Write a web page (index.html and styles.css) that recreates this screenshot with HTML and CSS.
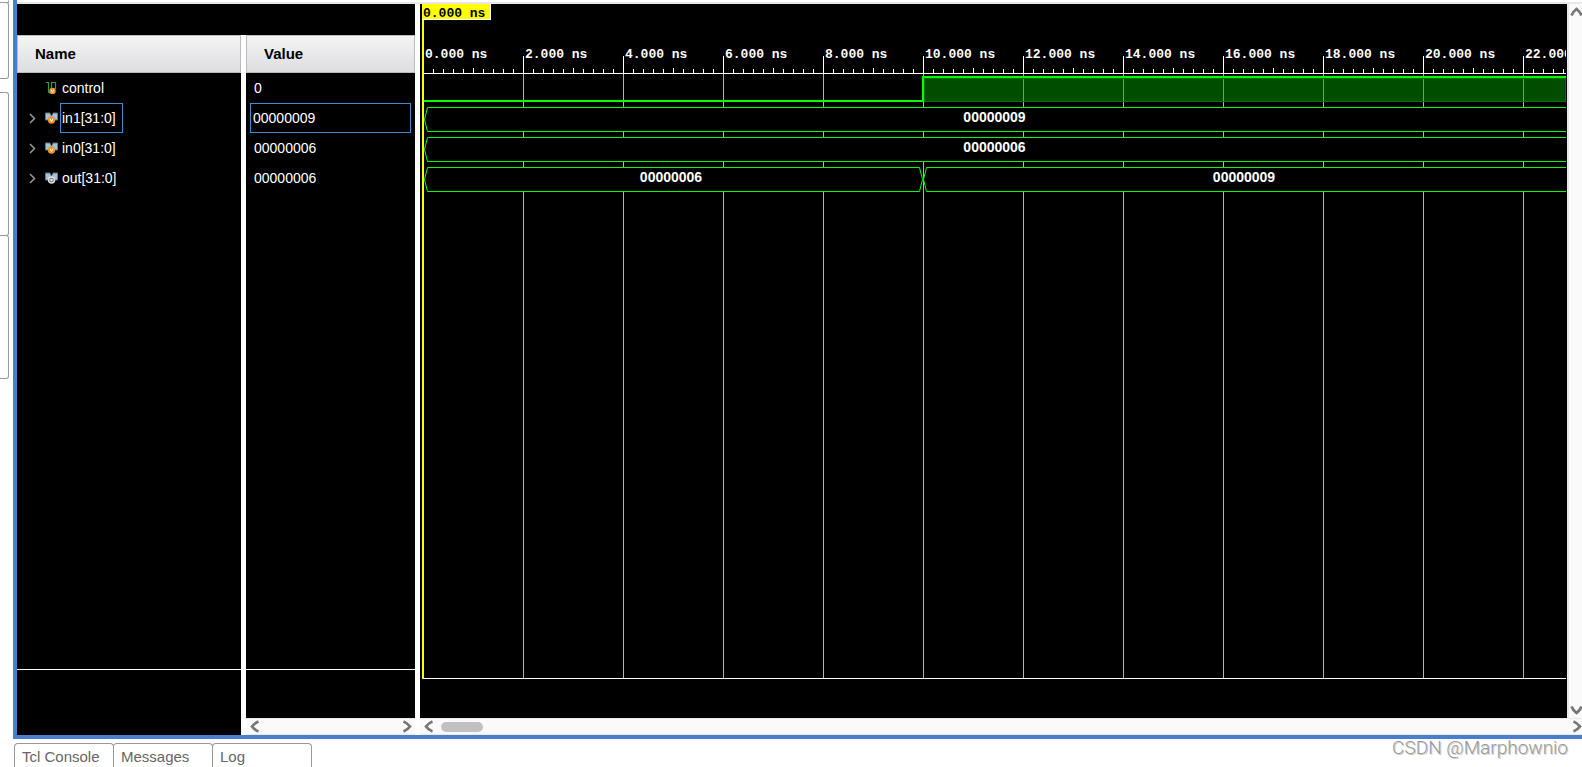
FILE: index.html
```
<!DOCTYPE html>
<html lang="en">
<head>
<meta charset="utf-8">
<title>Waveform</title>
<link rel="stylesheet" href="styles.css">
</head>
<body>
<svg class="defs" aria-hidden="true">
  <symbol id="chev-left" viewBox="0 0 10 13"><path d="M8.500 1.500C6 2.500 3.500 4.500 2 6.500C3.500 8.500 6 10.500 8.500 11.500" fill="none" stroke="#777" stroke-width="2.800"/></symbol>
  <symbol id="chev-right" viewBox="0 0 10 13"><path d="M1.500 1.500C4 2.500 6.500 4.500 8 6.500C6.500 8.500 4 10.500 1.500 11.500" fill="none" stroke="#777" stroke-width="2.800"/></symbol>
  <symbol id="chev-up" viewBox="0 0 13 10"><path d="M1.500 8.500C2.500 6 4.500 3.500 6.500 2C8.500 3.500 10.500 6 11.500 8.500" fill="none" stroke="#777" stroke-width="2.800"/></symbol>
  <symbol id="chev-down" viewBox="0 0 13 10"><path d="M1.500 1.500C2.500 4 4.500 6.500 6.500 8C8.500 6.500 10.500 4 11.500 1.500" fill="none" stroke="#777" stroke-width="2.800"/></symbol>
  <symbol id="expand" viewBox="0 0 7 11"><path d="M1 1L5.500 5.500L1 10" fill="none" stroke="#999" stroke-width="1.500"/></symbol>
  <symbol id="badge" viewBox="0 0 8 8"><circle cx="4" cy="4" r="3.700" fill="#f0922b"/><path d="M2.500 2.500L4 5.500L5.500 2.500" fill="none" stroke="#fff" stroke-width="1"/></symbol>
  <symbol id="wire" viewBox="0 0 13 13"><path d="M1 .5H3.500V10.500M6.500 11V.5H10.500V7M3.500 10.500H6" fill="none" stroke="#2f9e46" stroke-width="1.200"/><use href="#badge" x="4" y="5.500" width="7" height="7"/></symbol>
  <symbol id="bus" viewBox="0 0 13 13"><path d="M.5 1H5L6.500 4L8 1H12.500V8H.5Z" fill="#9cc4dc" stroke="#68757c" stroke-width="1"/><path d="M5.500 1H7.500L6.500 3.500Z" fill="#000"/></symbol>
  <symbol id="bus-in" viewBox="0 0 13 13"><use href="#bus" width="13" height="13"/><use href="#badge" x="2.500" y="4" width="8" height="8"/></symbol>
  <symbol id="bus-out" viewBox="0 0 13 13"><use href="#bus" width="13" height="13"/><circle cx="6.500" cy="8" r="3" fill="#777" stroke="#ddd" stroke-width="1.500"/><circle cx="6.500" cy="8" r="1.200" fill="#eee"/></symbol>
  <symbol id="cap-left" viewBox="0 0 4 25"><path d="M4 .5H3.500L.5 12.500L3.500 24.500H4" fill="#000" stroke="#0f0"/></symbol>
  <symbol id="cap-right" viewBox="0 0 4 25"><path d="M0 .5H.5L3.500 12.500L.5 24.500H0" fill="#000" stroke="#0f0"/></symbol>
</svg>

<div class="workspace">
  <aside class="dock">
    <div class="dock-tab dock-first"></div>
    <div class="dock-tab dock-second"></div>
    <div class="dock-tab dock-third"></div>
    <div class="dock-tab dock-fourth"></div>
  </aside>

  <main class="panel">
    <section class="signals">
      <div class="column names">
        <h2 class="head">Name</h2>
        <div class="rows">
          <div class="row"><span class="toggle"></span><svg class="icon"><use href="#wire"/></svg><span class="label">control</span></div>
          <div class="row"><button class="toggle" aria-label="Expand in1"><svg class="arrow"><use href="#expand"/></svg></button><svg class="icon"><use href="#bus-in"/></svg><span class="label selected">in1[31:0]</span></div>
          <div class="row"><button class="toggle" aria-label="Expand in0"><svg class="arrow"><use href="#expand"/></svg></button><svg class="icon"><use href="#bus-in"/></svg><span class="label">in0[31:0]</span></div>
          <div class="row"><button class="toggle" aria-label="Expand out"><svg class="arrow"><use href="#expand"/></svg></button><svg class="icon"><use href="#bus-out"/></svg><span class="label">out[31:0]</span></div>
        </div>
        <div class="foot"></div>
      </div>
      <div class="column values">
        <h2 class="head">Value</h2>
        <div class="rows">
          <div class="row"><span class="value">0</span></div>
          <div class="row"><span class="value selected">00000009</span></div>
          <div class="row"><span class="value">00000006</span></div>
          <div class="row"><span class="value">00000006</span></div>
        </div>
        <div class="foot foot-short"></div>
        <div class="hscroll">
          <button aria-label="Scroll left"><svg class="chev"><use href="#chev-left"/></svg></button>
          <button class="end" aria-label="Scroll right"><svg class="chev"><use href="#chev-right"/></svg></button>
        </div>
      </div>
    </section>

    <section class="wave">
      <div class="view">
        <div class="canvas">
          <div class="ruler">
            <div class="times"><span>0.000 ns</span><span>2.000 ns</span><span>4.000 ns</span><span>6.000 ns</span><span>8.000 ns</span><span>10.000 ns</span><span>12.000 ns</span><span>14.000 ns</span><span>16.000 ns</span><span>18.000 ns</span><span>20.000 ns</span><span>22.000 ns</span></div>
            <div class="ticks"></div>
          </div>
          <div class="plot">
            <div class="track">
              <div class="low" style="width:498px"></div>
              <div class="high"></div>
            </div>
            <div class="track">
              <div class="segment rest"><svg class="cap"><use href="#cap-left"/></svg><span class="data">00000009</span></div>
            </div>
            <div class="track">
              <div class="segment rest"><svg class="cap"><use href="#cap-left"/></svg><span class="data">00000006</span></div>
            </div>
            <div class="track">
              <div class="segment" style="width:499px"><svg class="cap"><use href="#cap-left"/></svg><span class="data">00000006</span><svg class="cap"><use href="#cap-right"/></svg></div>
              <div class="segment rest"><svg class="cap"><use href="#cap-left"/></svg><span class="data">00000009</span></div>
            </div>
          </div>
          <div class="cursor"><span class="marker">0.000 ns</span></div>
        </div>
        <div class="vscroll">
          <button aria-label="Scroll up"><svg class="chev-v"><use href="#chev-up"/></svg></button>
          <button aria-label="Scroll down"><svg class="chev-v"><use href="#chev-down"/></svg></button>
        </div>
      </div>
      <div class="hscroll wide">
        <button aria-label="Scroll left"><svg class="chev"><use href="#chev-left"/></svg></button>
        <div class="thumb"></div>
        <button class="end" aria-label="Scroll right"><svg class="chev"><use href="#chev-right"/></svg></button>
      </div>
    </section>
  </main>
</div>

<footer class="bottom">
  <nav class="tabs"><button>Tcl Console</button><button>Messages</button><button>Log</button></nav>
  <span class="watermark">CSDN @Marphownio</span>
</footer>
</body>
</html>
```
FILE: styles.css
```
* { box-sizing: border-box; }

body {
  margin: 0;
  height: 100vh;
  overflow: hidden;
  display: flex;
  flex-direction: column;
  background: #fff;
  font-family: "Liberation Sans", Arial, sans-serif;
  font-size: 14px;
}

button {
  padding: 0;
  border: 0;
  background: none;
  font: inherit;
  color: inherit;
}

svg { display: block; flex: none; }
.defs { position: absolute; width: 0; height: 0; }

.workspace { flex: 1; min-height: 0; display: flex; }

/* left dock */
.dock { width: 13px; padding-right: 4px; flex: none; }
.dock-tab { border: 1px solid #999; border-left: 0; border-radius: 0 3px 3px 0; }
.dock-first { height: 3px; border-top: 0; }
.dock-second { height: 77px; margin-top: -1px; }
.dock-third { height: 144px; margin-top: 13px; }
.dock-fourth { height: 144px; margin-top: -1px; }

.panel {
  flex: 1;
  min-width: 0;
  display: flex;
  gap: 5px;
  padding-top: 4px;
  border-left: 4px solid #4a7dcf;
  border-bottom: 4px solid #4a7dcf;
  background: linear-gradient(#fff 2px, #e8e8e8 2px, #e8e8e8 4px, #fff 4px);
}

/* signal list */
.signals {
  flex: none;
  display: flex;
  gap: 5px;
  border-top: 31px solid #000;
}
.column { display: flex; flex-direction: column; background: #000; color: #fff; }
.names { width: 224px; }
.values { width: 169px; }
.head {
  margin: 0;
  height: 38px;
  padding-left: 17px;
  border: 1px solid #bbb;
  background: linear-gradient(#f4f4f4, #dedee1);
  color: #000;
  font-size: 15px;
  line-height: 36px;
}
.rows { flex: 1; }
.row { height: 30px; display: flex; align-items: center; }
.toggle { width: 28px; padding-left: 12px; }
.arrow { width: 7px; height: 11px; }
.icon { width: 13px; height: 13px; margin-right: 2px; }
.label, .value { height: 30px; line-height: 28px; border: 1px solid transparent; }
.label { padding: 0 6px 0 1px; }
.value { flex: 1; margin: 0 4px; padding-left: 3px; }
.selected { border-color: #3c8ed0; }
.value.selected { padding-left: 2px; }
.foot { height: 66px; border-top: 1px solid #fff; }
.foot-short { height: 49px; }

/* scroll bars */
.hscroll {
  height: 17px;
  padding: 0 3px 0 4px;
  display: flex;
  align-items: center;
  background: #fafafa;
  border-top: 1px solid #e8e8e8;
  border-bottom: 1px solid #e8e8e8;
}
.end { margin-left: auto; }
.chev { width: 10px; height: 13px; }
.thumb { width: 42px; height: 10px; margin-left: 7px; border-radius: 5px; background: #c1c1c1; }
.wide { padding-right: 0; overflow: hidden; }
.vscroll {
  width: 15px;
  flex: none;
  display: flex;
  flex-direction: column;
  justify-content: space-between;
  padding: 3px 0;
  overflow: hidden;
  background: #fafafa;
  border-left: 2px solid #e8e8e8;
}
.vscroll button { padding-left: 1px; }
.chev-v { width: 13px; height: 10px; }

/* waveform */
.wave { flex: 1; min-width: 0; display: flex; flex-direction: column; }
.view { flex: 1; min-height: 0; display: flex; }
.canvas {
  position: relative;
  flex: 1;
  min-width: 0;
  display: flex;
  flex-direction: column;
  padding: 0 1px 39px 3px;
  background: #000;
  color: #fff;
}
.ruler {
  height: 70px;
  display: flex;
  flex-direction: column;
  justify-content: flex-end;
  background: linear-gradient(90deg, #fff 1px, transparent 1px) 0 100% / 100px 17px repeat-x;
  border-bottom: 1px solid #fff;
}
.times {
  display: flex;
  overflow: hidden;
  font: bold 13px/16px "Liberation Mono", monospace;
  white-space: nowrap;
}
.times span { width: 100px; flex: none; padding-left: 2px; }
.ticks {
  height: 10px;
  background:
    linear-gradient(90deg, #fff 1px, transparent 1px) 50px 100% / 100px 5px repeat-x,
    linear-gradient(90deg, #fff 1px, transparent 1px) 0 100% / 10px 4px repeat-x;
}
.plot {
  flex: 1;
  padding: 2px 0 0 1px;
  background: linear-gradient(90deg, #b4b4b4 1px, transparent 1px) 0 0 / 100px 100%;
  border-bottom: 1px solid #fff;
}
.track { height: 30px; display: flex; align-items: flex-start; }
.track + .track { padding-top: 1px; }
.low { flex: none; height: 26px; border-bottom: 2px solid #0f0; }
.high {
  flex: 1;
  height: 26px;
  border-top: 2px solid #0f0;
  border-left: 2px solid #0f0;
  background: rgba(0, 160, 0, .48);
  box-shadow: inset -1px -1px #007400, inset 1px 1px #007400;
}
.segment { display: flex; flex: none; height: 25px; }
.segment.rest { flex: 1; }
.cap { width: 4px; height: 25px; }
.data {
  flex: 1;
  padding-right: 5px;
  background: #000;
  border-top: 1px solid #0f0;
  border-bottom: 1px solid #0f0;
  font-weight: bold;
  line-height: 18px;
  text-align: center;
}
.cursor {
  position: absolute;
  left: 2px;
  top: 0;
  bottom: 39px;
  width: 2px;
  background: #ff0;
}
.marker {
  display: block;
  width: 69px;
  height: 16px;
  padding-left: 1px;
  background: #ff0;
  border-right: 1px solid #fff;
  border-bottom: 1px solid #fff;
  color: #000;
  font: bold 13px/20px "Liberation Mono", monospace;
  white-space: nowrap;
}

/* bottom strip */
.bottom { height: 28px; flex: none; display: flex; justify-content: space-between; padding: 0 14px; }
.tabs { display: flex; padding-top: 4px; }
.tabs button {
  width: 100px;
  height: 24px;
  margin-right: -1px;
  padding: 3px 0 0 7px;
  border: 1px solid #999;
  border-bottom: 0;
  border-radius: 4px 4px 0 0;
  color: #666;
  font-size: 15px;
  line-height: 20px;
  text-align: left;
}
.watermark {
  color: #999;
  font: 300 19px/18px Roboto, sans-serif;
  text-shadow: 1px 1px #ccc;
}
```
